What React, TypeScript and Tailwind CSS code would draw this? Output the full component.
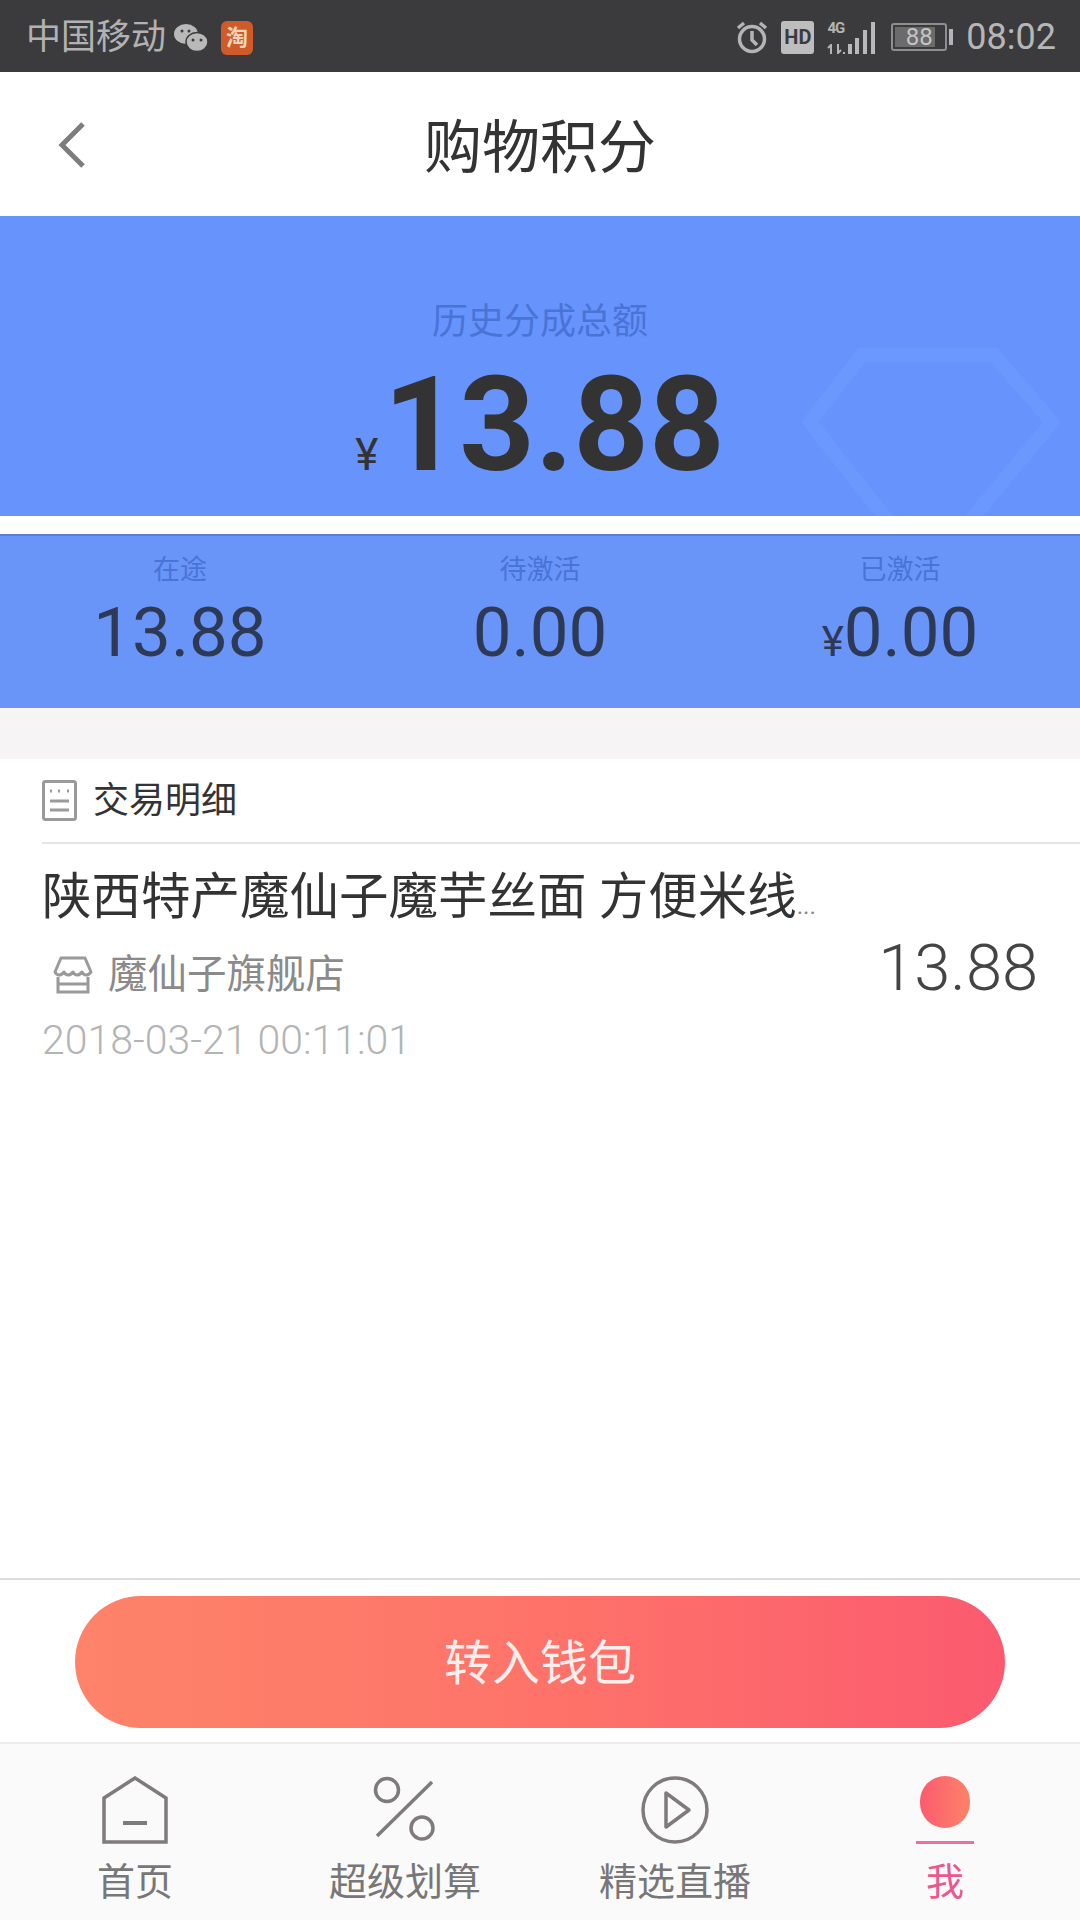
const cjk = "font-['Roboto','Noto_Sans_CJK_SC',sans-serif]";

function StatusIcons() {
  return (
    <div className="flex items-center pt-[2px]">
      {/* alarm */}
      <svg width="32" height="34" viewBox="0 0 32 34" fill="none" stroke="#b4b4b4" strokeWidth="3.5">
        <circle cx="16" cy="19" r="12.5" />
        <path d="M16 11v9l5 5M2 8l6-5M30 8l-6-5" />
      </svg>
      {/* HD */}
      <div className="ml-[13px] flex h-[33px] w-[33px] items-center justify-center rounded-[3px] bg-[#bdbdbd] text-[20px] leading-none font-bold text-[#3b3b3d]">
        HD
      </div>
      {/* network */}
      <div className="ml-[12px] flex h-[33px] items-end gap-[2px]">
        <div className="flex h-full w-[19px] flex-col items-center justify-between">
          <span className="text-[15px] leading-[14px] font-bold tracking-[-1px] text-[#b4b4b4]">4G</span>
          <svg width="19" height="10" viewBox="0 0 19 10" fill="none" stroke="#b4b4b4" strokeWidth="2">
            <path d="M5 10V1L2 4M12 0v9l3-3" />
            <path d="M18 8v2" />
          </svg>
        </div>
        <svg width="30" height="33" viewBox="0 0 30 33" fill="#b9b9b9">
          <rect x="1" y="23" width="4" height="10" />
          <rect x="8" y="17" width="4" height="16" />
          <rect x="16" y="9" width="4" height="24" />
          <rect x="24" y="1" width="4" height="32" />
        </svg>
      </div>
      {/* battery */}
      <div className="ml-[14px] flex items-center">
        <div className="relative flex h-[28px] w-[56px] items-center justify-center rounded-[3px] border-2 border-[#8e8e8e] text-[24px] leading-none text-[#c4c4c4]">
          <div className="absolute inset-y-[2px] left-[2px] w-[40px] bg-[#6b6b6b]" />
          <span className="relative">88</span>
        </div>
        <div className="ml-[2px] h-[16px] w-[4px] bg-[#b4b4b4]" />
      </div>
      <span className="ml-[13px] text-[36px] leading-none text-[#b6b6b6]">08:02</span>
    </div>
  );
}

function HomeIcon() {
  return (
    <svg width="66" height="68" viewBox="0 0 66 68" fill="none" stroke="#807b7b" strokeWidth="3.5">
      <path d="M2 66V22L33 2l31 20v44z" />
      <path d="M21 47h24" strokeWidth="4" />
    </svg>
  );
}

function PercentIcon() {
  return (
    <svg width="66" height="68" viewBox="0 0 66 68" fill="none" stroke="#807b7b" strokeWidth="3.5">
      <circle cx="15" cy="14" r="11.5" />
      <circle cx="50" cy="52" r="11" />
      <path d="M60 6L5 60" />
    </svg>
  );
}

function PlayIcon() {
  return (
    <svg width="68" height="68" viewBox="0 0 68 68" fill="none" stroke="#807b7b" strokeWidth="3.5">
      <circle cx="34" cy="34" r="32" />
      <path d="M25 17l23 17-23 17z" strokeLinejoin="round" />
    </svg>
  );
}

function MeIcon() {
  return (
    <div className="flex h-[68px] w-[58px] flex-col items-center justify-between">
      <div className="h-[52px] w-[50px] rounded-full bg-gradient-to-r from-[#fc5a6f] to-[#fd8269]" />
      <div className="h-[3px] w-[58px] bg-[#ee6f98]" />
    </div>
  );
}

const tabs = [
  { label: "首页", icon: <HomeIcon /> },
  { label: "超级划算", icon: <PercentIcon /> },
  { label: "精选直播", icon: <PlayIcon /> },
  { label: "我", icon: <MeIcon />, active: true },
];

const stats = [
  { label: "在途", value: "13.88" },
  { label: "待激活", value: "0.00" },
  { label: "已激活", value: "0.00", yen: true },
];

export default function App() {
  return (
    <div className={`flex h-[1920px] w-[1080px] flex-col overflow-hidden bg-white ${cjk}`}>
      {/* status bar */}
      <div className="flex h-[72px] shrink-0 items-center justify-between bg-[#3b3b3d] pr-[24px] pl-[26px]">
        <div className="flex items-center pt-[3px]">
          <span className="text-[35px] leading-none text-[#b2b2b2]">中国移动</span>
          <svg width="34" height="30" viewBox="0 0 34 30" className="ml-[8px]" fill="#b9b9b9">
            <ellipse cx="12" cy="11" rx="12" ry="10" />
            <ellipse cx="23" cy="19" rx="11" ry="9.5" stroke="#3b3b3d" strokeWidth="1.5" />
            <circle cx="8" cy="8" r="1.5" fill="#3b3b3d" />
            <circle cx="15" cy="8" r="1.5" fill="#3b3b3d" />
            <circle cx="19" cy="17" r="1.5" fill="#3b3b3d" />
            <circle cx="27" cy="17" r="1.5" fill="#3b3b3d" />
          </svg>
          <div className="ml-[13px] flex h-[34px] w-[32px] items-center justify-center rounded-[6px] bg-[#cf5a2a] text-[22px] leading-none font-bold text-[#f3d3b8]">
            淘
          </div>
        </div>
        <StatusIcons />
      </div>

      {/* header */}
      <div className="relative flex h-[144px] shrink-0 items-center justify-center pt-[8px]">
        <svg width="28" height="48" viewBox="0 0 28 48" fill="none" stroke="#7d7d7d" strokeWidth="5" className="absolute top-[49px] left-[58px]">
          <path d="M25 3L4 24l21 21" />
        </svg>
        <span className="text-[58px] leading-none text-[#333]">购物积分</span>
      </div>

      {/* total */}
      <div className="relative flex h-[300px] shrink-0 flex-col items-center overflow-hidden bg-[#6794fc]">
        <svg width="270" height="240" viewBox="0 0 270 240" fill="none" stroke="#6b98fd" strokeWidth="14" className="absolute top-[130px] left-[798px]">
          <path d="M64 9h132l58 67-124 150L12 76z" />
        </svg>
        <span className="relative mt-[85px] text-[36px] leading-[42px] text-[#4a73d6]">历史分成总额</span>
        <div className="relative mt-[17px] flex items-baseline text-[#333]">
          <span className="mr-[5px] text-[44px] leading-none">¥</span>
          <span className="text-[132px] leading-[130px] font-bold">13.88</span>
        </div>
      </div>

      {/* stats */}
      <div className="mt-[18px] grid h-[174px] shrink-0 grid-cols-3 border-t-2 border-[#5a7fcf] bg-[#6995f9]">
        {stats.map((s) => (
          <div key={s.label} className="flex flex-col items-center pt-[18px]">
            <span className="text-[27px] leading-[32px] text-[#4a73d6]">{s.label}</span>
            <div className="mt-[8px] flex items-baseline text-[#2e3a55]">
              {s.yen && <span className="text-[42px] leading-none">¥</span>}
              <span className="text-[69px] leading-[78px]">{s.value}</span>
            </div>
          </div>
        ))}
      </div>
      <div className="h-[51px] shrink-0 bg-[#f7f4f5]" />

      {/* transactions */}
      <div className="flex min-h-0 flex-1 flex-col pl-[42px]">
        <div className="flex h-[85px] shrink-0 items-center border-b-2 border-[#e4e4e4]">
          <svg width="35" height="41" viewBox="0 0 35 41" fill="none" stroke="#9a9a9a" strokeWidth="3">
            <rect x="1.5" y="1.5" width="32" height="38" rx="2" />
            <path d="M8 11h2M16 11h2M25 11h2M8 21h19M8 30h19" />
          </svg>
          <span className="ml-[16px] text-[36px] leading-none text-[#333]">交易明细</span>
        </div>
        <div className="flex items-center pr-[42px]">
          <div className="min-w-0 flex-1">
            <div className="mt-[24px] flex items-baseline text-[49.5px] leading-[58px] text-[#333]">
              <span>陕西特产魔仙子魔芋丝面 方便米线</span>
              <span className="text-[24px] text-[#888]">...</span>
            </div>
            <div className="mt-[17px] flex items-center pl-[11px]">
              <svg width="40" height="38" viewBox="0 0 40 38" fill="none" stroke="#9a9a9a" strokeWidth="3">
                <path d="M8 2h24l6 14c-3 4-7 4-9 0-3 4-7 4-9 0-3 4-7 4-9 0-3 4-7 4-9 0z" strokeLinejoin="round" />
                <path d="M5 21v15h30V21M5 28h30" />
              </svg>
              <span className="ml-[15px] text-[39.5px] leading-[46px] text-[#8a8a8a]">魔仙子旗舰店</span>
            </div>
            <div className="mt-[19px] text-[41px] leading-[46px] font-light text-[#b4b4b4]">2018-03-21 00:11:01</div>
          </div>
          <span className="mt-[30px] text-[65px] leading-none font-light text-[#444]">13.88</span>
        </div>
      </div>

      {/* action */}
      <div className="h-[164px] shrink-0 border-t-2 border-[#dcdcdc] px-[75px] pt-[16px]">
        <button className="flex h-[132px] w-full items-center justify-center rounded-full bg-gradient-to-r from-[#fd8369] via-[#fe7369] to-[#fb5a6f] pt-[3px] text-[48px] leading-none text-[#fdeeee]">
          转入钱包
        </button>
      </div>

      {/* tab bar */}
      <div className="grid h-[178px] shrink-0 grid-cols-4 border-t-2 border-[#ececec] bg-[#fafafa]">
        {tabs.map((t) => (
          <div key={t.label} className="flex flex-col items-center pt-[32px]">
            <div className="flex h-[68px] items-center justify-center">{t.icon}</div>
            <span className={`mt-[16px] text-[38px] leading-[44px] ${t.active ? "text-[#e9588f]" : "text-[#777]"}`}>{t.label}</span>
          </div>
        ))}
      </div>
    </div>
  );
}
